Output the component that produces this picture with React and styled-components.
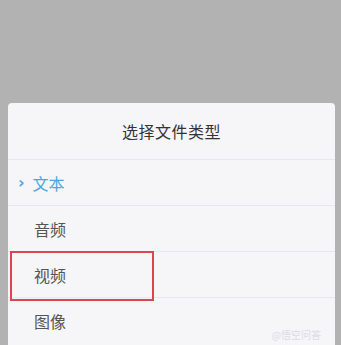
import React from 'react';
import styled, { createGlobalStyle } from 'styled-components';

const Global = createGlobalStyle`
  html, body {
    margin: 0;
    padding: 0;
    background: #b2b2b2;
  }
  body {
    font-family: "Noto Sans CJK SC", "Noto Sans", sans-serif;
  }
`;

const Screen = styled.div`
  width: 341px;
  height: 345px;
  background: #b2b2b2;
  padding: 103px 6px 0 8px;
  box-sizing: border-box;
  overflow: hidden;
`;

const Sheet = styled.div`
  background: #f6f5f8;
  border-radius: 4px 4px 0 0;
  height: 242px;
  display: flex;
  flex-direction: column;
  position: relative;
`;

const Title = styled.div`
  height: 57px;
  display: flex;
  align-items: center;
  justify-content: center;
  font-size: 16px;
  color: #333;
  border-bottom: 1px solid #e8e7eb;
  box-sizing: border-box;
  letter-spacing: 0.5px;
`;

const Row = styled.div`
  height: 46px;
  flex-shrink: 0;
  display: flex;
  align-items: center;
  padding-left: ${(p) => (p.$active ? '10px' : '26px')};
  font-size: 16px;
  color: ${(p) => (p.$active ? '#4da7dd' : '#555')};
  border-bottom: ${(p) => (p.$last ? 'none' : '1px solid #e8e7eb')};
  box-sizing: border-box;
  position: relative;
`;

const Chevron = styled.span`
  font-size: 16px;
  font-weight: bold;
  margin-right: 8px;
  font-family: "DejaVu Sans", sans-serif;
`;

const Highlight = styled.div`
  position: absolute;
  left: 2px;
  top: -1px;
  width: 144px;
  height: 50px;
  border: 2px solid #d84652;
  box-sizing: border-box;
  pointer-events: none;
`;

const Watermark = styled.div`
  position: absolute;
  right: 14px;
  bottom: 4px;
  font-size: 10px;
  line-height: 12px;
  color: #dcdce0;
  font-family: "Noto Sans CJK SC", sans-serif;
`;

const items = [
  { label: '文本', active: true },
  { label: '音频' },
  { label: '视频', marked: true },
  { label: '图像', last: true },
];

export default function App() {
  return (
    <>
      <Global />
      <Screen>
        <Sheet>
          <Title>选择文件类型</Title>
          {items.map((it) => (
            <Row key={it.label} $active={it.active} $last={it.last}>
              {it.active && <Chevron>›</Chevron>}
              {it.label}
              {it.marked && <Highlight />}
            </Row>
          ))}
          <Watermark>@悟空问答</Watermark>
        </Sheet>
      </Screen>
    </>
  );
}
